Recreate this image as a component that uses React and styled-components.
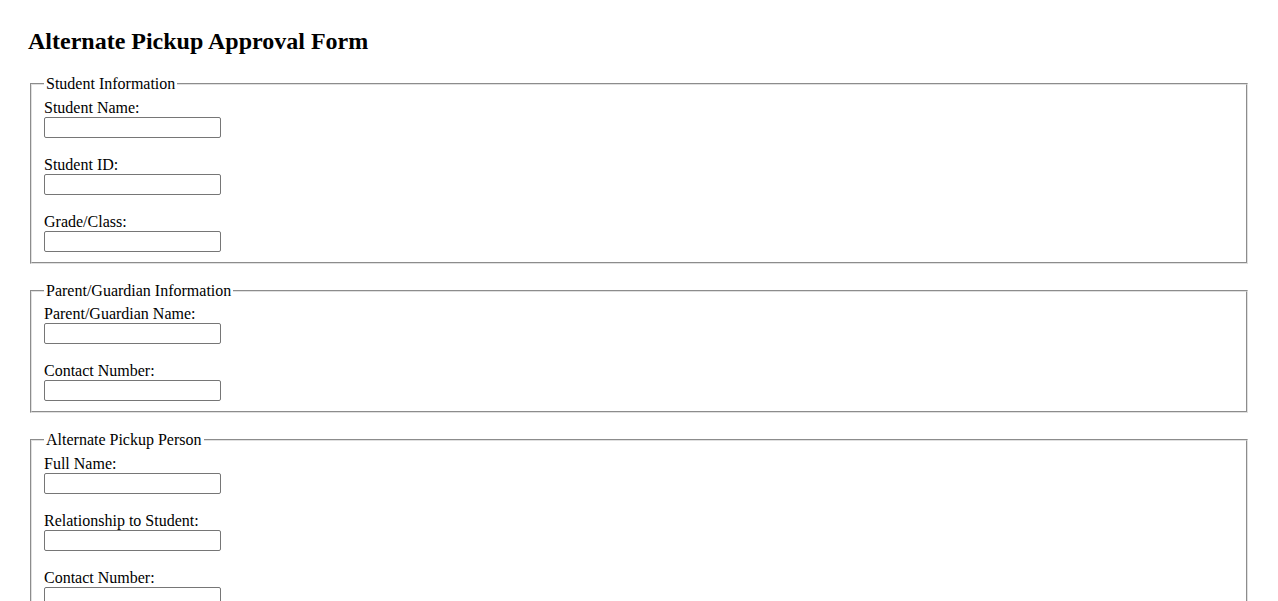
import styled, { createGlobalStyle } from "styled-components";

const GlobalStyle = createGlobalStyle`
  body {
    margin: 8px;
    padding: 20px;
    font-family: "Liberation Serif", "Times New Roman", serif;
    font-size: 16px;
    color: #000;
    background: #fff;
  }
`;

const Title = styled.h2`
  margin: 0 0 20px;
  font-size: 24px;
  font-weight: bold;
`;

const Section = styled.fieldset`
  margin: 0 2px 18px;
  padding: 5.6px 12px 10px;
  border: 2px groove #e0e0e0;
  display: flex;
  flex-direction: column;
  gap: 18px;
`;

const Legend = styled.legend`
  padding: 0 2px;
`;

const Field = styled.div`
  display: flex;
  flex-direction: column;
  align-items: flex-start;
`;

const Label = styled.label`
  display: block;
  line-height: 18px;
`;

const Input = styled.input`
  box-sizing: border-box;
  width: 177px;
  height: 21px;
  margin: 0;
  padding: 1px 2px;
  border: 1px solid #767676;
  border-radius: 2px;
  font-family: Arial, "Liberation Sans", sans-serif;
  font-size: 13.33px;
`;

const sections = [
  {
    title: "Student Information",
    fields: ["Student Name:", "Student ID:", "Grade/Class:"],
  },
  {
    title: "Parent/Guardian Information",
    fields: ["Parent/Guardian Name:", "Contact Number:"],
  },
  {
    title: "Alternate Pickup Person",
    fields: ["Full Name:", "Relationship to Student:", "Contact Number:", "ID Number:"],
  },
];

export default function App() {
  return (
    <>
      <GlobalStyle />
      <Title>Alternate Pickup Approval Form</Title>
      <form>
        {sections.map((s, i) => (
          <Section key={s.title}>
            <Legend>{s.title}</Legend>
            {s.fields.map((f, j) => (
              <Field key={f}>
                <Label htmlFor={`f-${i}-${j}`}>{f}</Label>
                <Input id={`f-${i}-${j}`} type="text" />
              </Field>
            ))}
          </Section>
        ))}
      </form>
    </>
  );
}
